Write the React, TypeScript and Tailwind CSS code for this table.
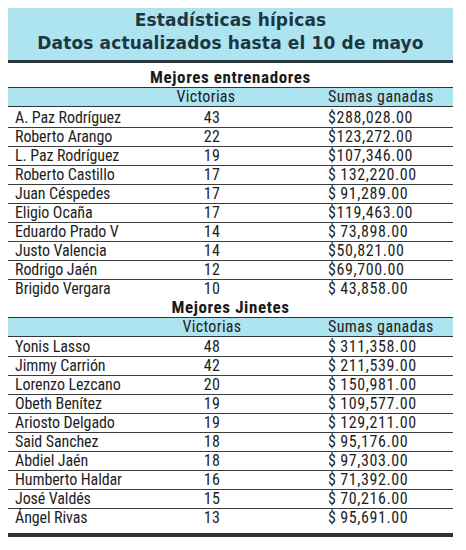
import React from 'react';

type Row = [string, string, string];

const entrenadores: Row[] = [
  ['A. Paz Rodríguez', '43', '$288,028.00'],
  ['Roberto Arango', '22', '$123,272.00'],
  ['L. Paz Rodríguez', '19', '$107,346.00'],
  ['Roberto Castillo', '17', '$\u2009132,220.00'],
  ['Juan Céspedes', '17', '$\u200991,289.00'],
  ['Eligio Ocaña', '17', '$119,463.00'],
  ['Eduardo Prado V', '14', '$\u200973,898.00'],
  ['Justo Valencia', '14', '$50,821.00'],
  ['Rodrigo Jaén', '12', '$69,700.00'],
  ['Brigido Vergara', '10', '$\u200943,858.00'],
];

const jinetes: Row[] = [
  ['Yonis Lasso', '48', '$\u2009311,358.00'],
  ['Jimmy Carrión', '42', '$\u2009211,539.00'],
  ['Lorenzo Lezcano', '20', '$\u2009150,981.00'],
  ['Obeth Benítez', '19', '$\u2009109,577.00'],
  ['Ariosto Delgado', '19', '$\u2009129,211.00'],
  ['Said Sanchez', '18', '$\u200995,176.00'],
  ['Abdiel Jaén', '18', '$\u200997,303.00'],
  ['Humberto Haldar', '16', '$\u200971,392.00'],
  ['José Valdés', '15', '$\u200970,216.00'],
  ['Ángel Rivas', '13', '$\u200995,691.00'],
];

const bodyFont = "font-['Roboto_Condensed','Liberation_Sans_Narrow',Roboto,sans-serif]";

function DataRows({ rows, firstH }: { rows: Row[]; firstH: string }) {
  return (
    <div>
      {rows.map((r, i) => {
        const first = i === 0;
        const last = i === rows.length - 1;
        return (
          <div
            key={r[0]}
            className={`grid grid-cols-[164px_80px_1fr] text-[16px] leading-[18px] text-[#1e1e1e] ${
              first ? firstH : 'h-[19px]'
            } ${last ? '' : 'border-b border-[#3c3c3c]'}`}
          >
            <div className="pl-[7px] whitespace-nowrap tracking-[-0.1px]">{r[0]}</div>
            <div className="text-center tracking-[0.3px]">{r[1]}</div>
            <div className="pl-[76px] whitespace-nowrap tracking-[0.6px]">{r[2]}</div>
          </div>
        );
      })}
    </div>
  );
}

function HeaderRow({ offset }: { offset: string }) {
  return (
    <div className="grid grid-cols-[164px_80px_1fr] h-[20px] border-y border-[#333333] bg-[#aee3f0] text-[16px] leading-[18px] text-[#222222]">
      <div />
      <div className={`text-center whitespace-nowrap tracking-[0.3px] ${offset}`}>Victorias</div>
      <div className="pl-[76px] whitespace-nowrap tracking-[0.4px]">Sumas ganadas</div>
    </div>
  );
}

export default function App() {
  return (
    <div className="w-[466px] h-[550px] bg-white pt-[8px]">
      <div className={`ml-[8px] w-[445px] ${bodyFont}`}>
        <div className="h-[55px] bg-[#aee3f0] border-b-[3px] border-[#28363e] flex flex-col items-center justify-center pb-[4px] font-['DejaVu_Sans',sans-serif] font-bold text-[17px] leading-[23px] tracking-[0.15px] text-[#1d3642]">
          <div>Estadísticas hípicas</div>
          <div>Datos actualizados hasta el 10 de mayo</div>
        </div>
        <div className="h-[24px] flex items-end justify-center text-[17px] leading-[19px] font-bold tracking-[0.6px] text-[#1a1a1a]">
          Mejores entrenadores
        </div>
        <HeaderRow offset="-translate-x-[6px]" />
        <DataRows rows={entrenadores} firstH="h-[21px] pt-[2px]" />
        <div className="h-[18px] flex items-end justify-center text-[17px] leading-[19px] font-bold tracking-[0.6px] text-[#1a1a1a]">
          Mejores Jinetes
        </div>
        <HeaderRow offset="" />
        <DataRows rows={jinetes} firstH="h-[20px] pt-[1px]" />
        <div className="mt-[5px] h-[4px] bg-[#2e3236]" />
      </div>
    </div>
  );
}
